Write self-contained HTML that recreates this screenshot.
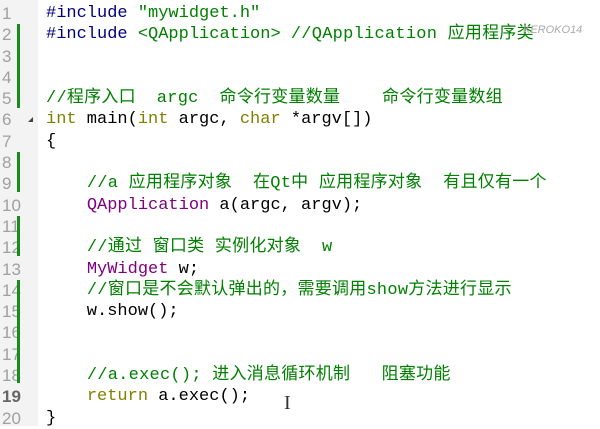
<!DOCTYPE html>
<html><head><meta charset="utf-8"><style>
body{margin:0;width:600px;height:426px;background:#fff;overflow:hidden;position:relative;font-family:"Liberation Mono","Noto Sans CJK SC",monospace;}
.g{position:absolute;left:0;top:0;width:38px;height:426px;background:#f3f3f3;}
.ln{position:absolute;left:0;width:36px;text-align:left;padding-left:2px;color:#a0a0a0;font-family:"Liberation Sans",sans-serif;font-size:17px;line-height:21.3px;}
.bar{position:absolute;left:17px;width:3px;background:#1a8a1a;}
.code{position:absolute;left:46px;top:3px;font-size:17px;line-height:21.3px;white-space:pre;color:#000;}
.c{color:#008000;letter-spacing:0.25px;}
.s{color:#008000;}
.k{color:#808000;}
.d{color:#000080;}
.p{color:#800080;}
</style></head><body>
<div class="g"></div>
<div class="ln" style="top:3px"><div>1</div><div>2</div><div>3</div><div>4</div><div>5</div><div>6</div><div>7</div><div>8</div><div>9</div><div>10</div><div>11</div><div>12</div><div>13</div><div>14</div><div>15</div><div>16</div><div>17</div><div>18</div><div><b style="color:#666">19</b></div><div>20</div></div>
<div style="position:absolute;left:28px;top:117px;width:0;height:0;border-left:5px solid transparent;border-bottom:5px solid #444;"></div>
<div class="bar" style="top:24px;height:84px"></div>
<div class="bar" style="top:152px;height:40px"></div>
<div class="bar" style="top:216px;height:40px"></div>
<div class="bar" style="top:280px;height:103px"></div>
<div class="code"><span class="d">#include</span> <span class="s">"mywidget.h"</span>
<span class="d">#include</span> <span class="s">&lt;QApplication&gt; </span><span class="c">//QApplication 应用程序类</span>


<span class="c">//程序入口  argc  命令行变量数量    命令行变量数组</span>
<span class="k">int</span> main(<span class="k">int</span> argc, <span class="k">char</span> *argv[])
{

    <span class="c">//a 应用程序对象  在Qt中 应用程序对象  有且仅有一个</span>
    <span class="p">QApplication</span> a(argc, argv);

    <span class="c">//通过 窗口类 实例化对象  w</span>
    <span class="p">MyWidget</span> w;
    <span class="c">//窗口是不会默认弹出的，需要调用show方法进行显示</span>
    w.show();


    <span class="c">//a.exec(); 进入消息循环机制   阻塞功能</span>
    <span class="k">return</span> a.exec();
}</div>
<div style="position:absolute;left:523px;top:24px;font-size:11px;font-style:italic;color:#aaa;font-family:'Liberation Sans',sans-serif">KEROKO14</div>
<div style="position:absolute;left:284px;top:392px;font-size:20px;color:#333;font-family:'Liberation Serif',serif">I</div>
</body></html>
